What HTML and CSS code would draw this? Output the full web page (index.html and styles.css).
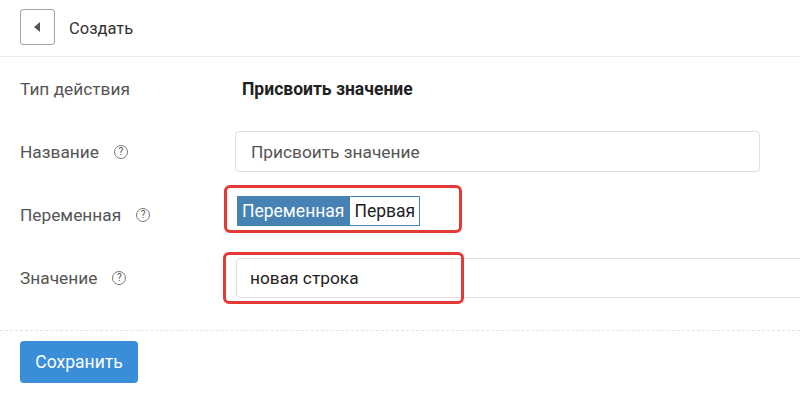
FILE: index.html
```html
<html>
    <head>
        <title>Создать</title>
        <link rel="stylesheet" href="styles.css">
    </head>
    <body>
        <div class="header">
            <button class="back-btn"><span class="back-arrow"></span></button>
            <span class="header-title">Создать</span>
        </div>
        <div class="form">
            <div class="form-row">
                <div class="form-label">Тип действия</div>
                <div class="form-value">Присвоить значение</div>
            </div>
            <div class="form-row">
                <div class="form-label">Название <span class="hint">?</span></div>
                <input class="text-field name-field" type="text" value="Присвоить значение" />
            </div>
            <div class="form-row">
                <div class="form-label">Переменная <span class="hint">?</span></div>
                <div class="mark-box">
                    <span class="var-tag"><span class="var-kind">Переменная</span><span class="var-name">Первая</span></span>
                </div>
            </div>
            <div class="form-row">
                <div class="form-label">Значение <span class="hint">?</span></div>
                <div class="field-wrap">
                    <input class="text-field value-field" type="text" value="новая строка" />
                    <span class="mark-overlay"></span>
                </div>
            </div>
        </div>
        <div class="footer">
            <button class="save-btn">Сохранить</button>
        </div>
    </body>
</html>
```

FILE: styles.css
```css
body {
    margin: 0;
    background: #fff;
    font-family: Roboto, "Liberation Sans", sans-serif;
    overflow: hidden;
}

.header {
    height: 57px;
    display: flex;
    align-items: center;
    padding-left: 20px;
    border-bottom: 1px solid #ececf4;
    box-sizing: border-box;
}

.back-btn {
    width: 35px;
    height: 36px;
    margin-top: -2px;
    border: 1px solid #a4a4a4;
    border-radius: 3px;
    background: #fff;
    display: flex;
    align-items: center;
    justify-content: center;
    padding: 0;
}

.back-arrow {
    width: 0;
    height: 0;
    border-top: 5px solid transparent;
    border-bottom: 5px solid transparent;
    border-right: 6px solid #555;
    margin-left: -2px;
}

.header-title {
    margin-left: 14px;
    font-size: 16.5px;
    color: #333;
}

.form {
    padding-bottom: 21px;
    border-bottom: 1px dashed #e3e5ec;
}

.form-row {
    height: 63px;
    display: flex;
    align-items: center;
}

.form-label {
    flex-shrink: 0;
    width: 215px;
    padding-left: 20px;
    box-sizing: border-box;
    font-size: 17.3px;
    color: #555;
    display: flex;
    align-items: center;
}

.hint {
    width: 12px;
    height: 12px;
    margin-left: 15px;
    border: 1px solid #7a7a7a;
    border-radius: 50%;
    font-size: 10px;
    line-height: 12px;
    text-align: center;
    color: #555;
}

.form-value {
    margin-left: 27px;
    font-size: 17.5px;
    font-weight: bold;
    color: #222;
}

.text-field {
    height: 41px;
    margin-left: 20px;
    border: 1px solid #dcdfe6;
    border-radius: 4px;
    padding: 0 15px;
    font-family: Roboto, "Liberation Sans", sans-serif;
    font-size: 17.3px;
    box-sizing: border-box;
    outline: none;
}

.name-field {
    width: 525px;
    color: #555;
}

.mark-box {
    flex-shrink: 0;
    margin-left: 9px;
    margin-bottom: 12px;
    width: 238px;
    height: 48px;
    border: 3px solid #e53935;
    border-radius: 6px;
    box-sizing: border-box;
    padding: 8px 10px 0;
}

.var-tag {
    display: inline-flex;
    height: 30px;
    font-size: 17.5px;
    line-height: 28px;
}

.var-kind {
    background: #4682b4;
    color: #fff;
    padding: 1px 5px 0 5px;
}

.var-name {
    border: 1px solid #4682b4;
    color: #222;
    padding: 0 4px 0 4px;
}

.field-wrap {
    flex-shrink: 0;
    position: relative;
    margin-left: 21px;
}

.value-field {
    width: 580px;
    height: 40px;
    margin: 0;
    color: #222;
    padding-left: 13px;
}

.mark-overlay {
    position: absolute;
    left: -13px;
    top: -6px;
    width: 241px;
    height: 52px;
    border: 3px solid #e53935;
    border-radius: 6px;
    box-sizing: border-box;
}

.footer {
    padding: 10px 20px;
}

.save-btn {
    height: 42px;
    width: 118px;
    background-color: #3a8ed8;
    color: #fff;
    border: none;
    border-radius: 4px;
    font-family: Roboto, "Liberation Sans", sans-serif;
    font-size: 17.5px;
    cursor: pointer;
}
```
